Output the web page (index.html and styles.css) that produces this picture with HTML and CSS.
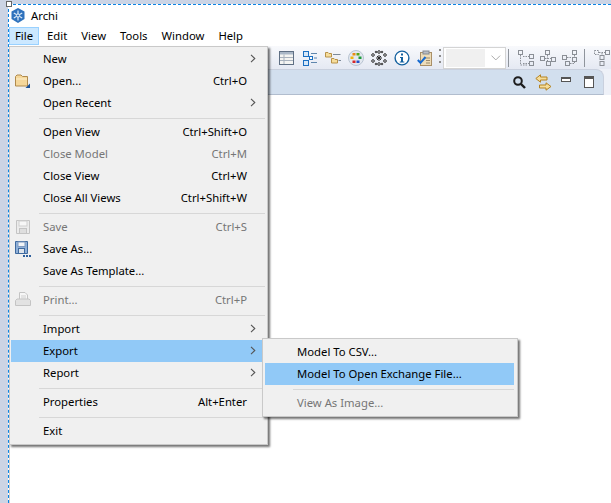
FILE: index.html
```html
<!DOCTYPE html>
<html lang="en">
<head>
	<meta charset="UTF-8">
	<link rel="stylesheet" href="styles.css">
	<title>Archi</title>
</head>
<body>
<div class="desk">
	<div class="handle"></div>
	<div class="win">
		<div class="title">
			<svg class="logo" width="14" height="15" viewBox="0 0 14 15"><path d="M7 0 13.5 3.5V11L7 15 .5 11V3.5Z" fill="#2f72bd"/><path d="M7 2.5V12.5M2.8 5 11.2 10M11.2 5 2.8 10" stroke="#dbe9f7" stroke-width="1.2"/><circle cx="7" cy="7.5" r="1.6" fill="#2f72bd" stroke="#dbe9f7"/></svg>
			<span>Archi</span>
		</div>
		<div class="menubar">
			<span class="top active">File</span>
			<span class="top">Edit</span>
			<span class="top">View</span>
			<span class="top">Tools</span>
			<span class="top">Window</span>
			<span class="top">Help</span>
		</div>
		<div class="toolbar">
			<svg class="ic" viewBox="0 0 16 16"><rect x=".5" y="1.5" width="14" height="13" fill="#f4f4f2" stroke="#5f6f84"/><rect x="1" y="2" width="13" height="2.5" fill="#aab7c7"/><path d="M1 7.5H14M1 10.5H14M5 4.5V14" stroke="#a9b2be"/></svg>
			<svg class="ic" viewBox="0 0 16 16"><rect x="1.500" y="1.500" width="5" height="5" fill="#d6e7f8" stroke="#1b6fc2"/><rect x="1.500" y="10.500" width="5" height="5" fill="#d6e7f8" stroke="#1b6fc2"/><rect x="7.500" y="6.500" width="3" height="3" fill="#fff" stroke="#1b6fc2"/><path d="M9 3.500H15M12 8H15M9 12.500H15" stroke="#5f86ad"/></svg>
			<svg class="ic" viewBox="0 0 16 16"><path d="M.5 2.500H3L4 3.500H6.500V7H.5Z" fill="#f6dd9c" stroke="#b8924a"/><path d="M6.500 8.500H9L10 9.500H12.500V13H6.500Z" fill="#f6dd9c" stroke="#b8924a"/><path d="M8 4.500H15.500M13.500 10.500H16" stroke="#7d8a99"/></svg>
			<svg class="ic" viewBox="0 0 16 16"><circle cx="8" cy="8" r="7.500" fill="#e3e8f0" stroke="#b9c4d2"/><rect x="4.500" y="3" width="3" height="2.500" fill="#e88a14"/><rect x="8.500" y="3" width="3" height="2.500" fill="#58a618"/><rect x="2.500" y="6.500" width="3" height="2.500" fill="#efb50f"/><rect x="10.500" y="6.500" width="3" height="2.500" fill="#1c9a3c"/><rect x="4.500" y="10.500" width="3" height="2.500" fill="#d6262a"/><rect x="8.500" y="10.500" width="3" height="2.500" fill="#2450c8"/></svg>
			<svg class="ic" viewBox="0 0 16 16" fill="none" stroke="#2b2b2b"><circle cx="2" cy="5" r="1.300"/><circle cx="2" cy="11" r="1.300"/><circle cx="14" cy="5" r="1.300"/><circle cx="14" cy="11" r="1.300"/><circle cx="8" cy="2" r="1.300"/><circle cx="8" cy="14" r="1.300"/><circle cx="5" cy="2" r=".8"/><circle cx="11" cy="2" r=".8"/><circle cx="5" cy="14" r=".8"/><circle cx="11" cy="14" r=".8"/><path d="M8 5V11M5 8H11M6 6 10 10M10 6 6 10"/></svg>
			<svg class="ic" viewBox="0 0 16 16"><circle cx="8" cy="8" r="6.900" fill="#fff" stroke="#14619f" stroke-width="1.400"/><rect x="7" y="3.500" width="2" height="2" fill="#14619f"/><path d="M6 7H9V11.500H10.300V12.500H5.800V11.500H7V8H6Z" fill="#14619f"/></svg>
			<svg class="ic" viewBox="0 0 16 16"><rect x="3.500" y="2.500" width="11" height="13" fill="#eddcb9" stroke="#a98f68"/><rect x="6" y="1" width="6" height="3" fill="#b9bdc4" stroke="#858a92"/><path d="M8 8H13M9 10.500H13M9 13H13" stroke="#9b8a6c"/><path d="M.8 10 3.500 12.800 8.500 7" fill="none" stroke="#1569d0" stroke-width="2"/></svg>
			<span class="grip"></span>
			<span class="combo"><span class="combo-fill"></span><svg width="10" height="6" viewBox="0 0 10 6"><path d="M.5.5 5 5 9.500.5" fill="none" stroke="#a8a8a8"/></svg></span>
			<span class="tsep"></span>
			<svg class="ic sm" viewBox="0 0 16 16" fill="none" stroke="#8b8f96"><rect x=".5" y=".5" width="4" height="4"/><rect x="11.500" y="4.500" width="4" height="4"/><rect x="11.500" y="11.500" width="4" height="4"/><path d="M2.500 5V15H10M5 6.500H11M5 13.500H11" stroke-dasharray="1.500 1"/></svg>
			<svg class="ic sm" viewBox="0 0 16 16" fill="none" stroke="#8b8f96"><rect x="5.500" y=".5" width="4" height="4"/><rect x=".5" y="6.500" width="4" height="4"/><rect x="11.500" y="7.500" width="4" height="4"/><rect x="6.500" y="11.500" width="4" height="4"/><path d="M7.500 5V11M5 8.500H11" stroke-dasharray="1.500 1"/></svg>
			<svg class="ic sm" viewBox="0 0 16 16" fill="none" stroke="#8b8f96"><rect x="10.500" y=".5" width="4" height="4"/><rect x=".5" y="5.500" width="4" height="4"/><rect x="10.500" y="7.500" width="4" height="4"/><rect x="3.500" y="11.500" width="4" height="4"/><path d="M5 7.500H10M12.500 5V7M8 13.500H12.500V12" stroke-dasharray="1.500 1"/></svg>
			<span class="tsep second"></span>
			<svg class="ic" viewBox="0 0 16 16" fill="none" stroke="#8b8f96"><rect x=".5" y=".5" width="4" height="4" stroke-dasharray="1.500 1"/><rect x="11.500" y=".5" width="4" height="4"/><rect x="6" y="5.500" width="4" height="4"/><rect x="6" y="11.500" width="4" height="4"/><path d="M5 2.500H11M8 3V5.500" stroke-dasharray="1.500 1"/></svg>
		</div>
		<div class="tabstrip">
			<div class="tabbar">
				<svg width="13" height="13" viewBox="0 0 13 13"><circle cx="5" cy="5" r="3.800" fill="none" stroke="#1d1d1d" stroke-width="2"/><path d="M8 8 12 12" stroke="#1d1d1d" stroke-width="2.400"/></svg>
				<svg width="17" height="17" viewBox="0 0 17 17"><path d="M.8 4.500 5.500.8V3H12V6H5.500V8.200Z" fill="#f5dd9a" stroke="#b58322"/><path d="M16 12.500 11 16.200V14H4.500V11H11V8.800Z" fill="#f5dd9a" stroke="#b58322"/></svg>
				<span class="minbtn"></span>
				<span class="maxbtn"></span>
			</div>
		</div>
		<div class="content"></div>

		<div class="menu file-menu">
			<div class="item"><span class="gut"></span><span class="lbl">New</span><span class="more"><svg width="6" height="9" viewBox="0 0 6 9"><path d="M1 .8 4.800 4.500 1 8.200" fill="none" stroke="#555" stroke-width="1.100"/></svg></span></div>
			<div class="item"><span class="gut"><svg width="16" height="16" viewBox="0 0 16 16"><path d="M.5 3.500 2 2H6L7.500 3.500H12.500V13H.5Z" fill="#f5d79a" stroke="#b08a4c"/><path d="M1 6H12" stroke="#fdf0cf"/><path d="M15 10.500V15H10.500Z" fill="#1b4f91"/></svg></span><span class="lbl">Open...</span><span class="key">Ctrl+O</span><span class="more"></span></div>
			<div class="item"><span class="gut"></span><span class="lbl">Open Recent</span><span class="more"><svg width="6" height="9" viewBox="0 0 6 9"><path d="M1 .8 4.800 4.500 1 8.200" fill="none" stroke="#555" stroke-width="1.100"/></svg></span></div>
			<div class="sep"></div>
			<div class="item"><span class="gut"></span><span class="lbl">Open View</span><span class="key">Ctrl+Shift+O</span><span class="more"></span></div>
			<div class="item off"><span class="gut"></span><span class="lbl">Close Model</span><span class="key">Ctrl+M</span><span class="more"></span></div>
			<div class="item"><span class="gut"></span><span class="lbl">Close View</span><span class="key">Ctrl+W</span><span class="more"></span></div>
			<div class="item"><span class="gut"></span><span class="lbl">Close All Views</span><span class="key">Ctrl+Shift+W</span><span class="more"></span></div>
			<div class="sep"></div>
			<div class="item off"><span class="gut"><svg width="16" height="16" viewBox="0 0 16 16"><path d="M1.500 1.500H14.500V14.500H1.500Z" fill="#ececec" stroke="#c4c4c4"/><rect x="4" y="2" width="8" height="5" fill="#f7f7f7" stroke="#cfcfcf"/><rect x="4.500" y="9.500" width="7" height="5" fill="#dedede" stroke="#c4c4c4"/></svg></span><span class="lbl">Save</span><span class="key">Ctrl+S</span><span class="more"></span></div>
			<div class="item"><span class="gut"><svg width="16" height="16" viewBox="0 0 16 16"><path d="M.5 .5H12.500V12.500H.5Z" fill="#8fb0d8" stroke="#3f6a9f"/><rect x="3" y="1" width="7" height="4.500" fill="#f2f5f8" stroke="#7f9ac0"/><rect x="3.500" y="7.500" width="6" height="5" fill="#dfe5ec" stroke="#3f6a9f"/><path d="M8 14H10V16H8ZM11 14H13V16H11ZM14 14H16V16H14Z" fill="#2e5f9c"/></svg></span><span class="lbl">Save As...</span><span class="more"></span></div>
			<div class="item"><span class="gut"></span><span class="lbl">Save As Template...</span><span class="more"></span></div>
			<div class="sep"></div>
			<div class="item off"><span class="gut"><svg width="16" height="16" viewBox="0 0 16 16"><path d="M4.500 .5H10L12.500 3V8H4.500Z" fill="#f6f6f6" stroke="#c4c4c4"/><path d="M.5 8.500 2 7H14L15.500 8.500V13.500H.5Z" fill="#e2e2e2" stroke="#c4c4c4"/><path d="M6 4H11M6 6H11" stroke="#cfcfcf"/></svg></span><span class="lbl">Print...</span><span class="key">Ctrl+P</span><span class="more"></span></div>
			<div class="sep"></div>
			<div class="item"><span class="gut"></span><span class="lbl">Import</span><span class="more"><svg width="6" height="9" viewBox="0 0 6 9"><path d="M1 .8 4.800 4.500 1 8.200" fill="none" stroke="#555" stroke-width="1.100"/></svg></span></div>
			<div class="item hot"><span class="gut"></span><span class="lbl">Export</span><span class="more"><svg width="6" height="9" viewBox="0 0 6 9"><path d="M1 .8 4.800 4.500 1 8.200" fill="none" stroke="#555" stroke-width="1.100"/></svg></span></div>
			<div class="item"><span class="gut"></span><span class="lbl">Report</span><span class="more"><svg width="6" height="9" viewBox="0 0 6 9"><path d="M1 .8 4.800 4.500 1 8.200" fill="none" stroke="#555" stroke-width="1.100"/></svg></span></div>
			<div class="sep"></div>
			<div class="item"><span class="gut"></span><span class="lbl">Properties</span><span class="key">Alt+Enter</span><span class="more"></span></div>
			<div class="sep"></div>
			<div class="item"><span class="gut"></span><span class="lbl">Exit</span><span class="more"></span></div>
		</div>

		<div class="menu export-menu">
			<div class="item"><span class="gut"></span><span class="lbl">Model To CSV...</span></div>
			<div class="item hot"><span class="gut"></span><span class="lbl">Model To Open Exchange File...</span></div>
			<div class="sep"></div>
			<div class="item off"><span class="gut"></span><span class="lbl">View As Image...</span></div>
		</div>
	</div>
</div>
</body>
</html>
```

FILE: styles.css
```css
* {
	box-sizing: border-box;
}
html, body {
	margin: 0;
	height: 100%;
	overflow: hidden;
}
body {
	font-family: "Noto Sans", "Open Sans", sans-serif;
	font-size: 11.3px;
	color: #000;
}
.desk {
	position: relative;
	height: 503px;
	padding: 4px 0 0 8px;
	background: #ccd4e4;
}
.handle {
	position: absolute;
	left: 6px;
	top: 1px;
	width: 6px;
	height: 6px;
	background: #fff;
	border: 1px solid #666;
	z-index: 3;
}
.win {
	position: relative;
	display: flex;
	flex-direction: column;
	height: 100%;
	background: #fff;
	border-top: 1px dashed #0b84e4;
	border-left: 1px dashed #0b84e4;
}
.title {
	display: flex;
	align-items: center;
	gap: 6px;
	height: 22px;
	padding: 0 0 1px 2px;
	flex: none;
}
.menubar {
	display: flex;
	height: 19px;
	flex: none;
}
.top {
	display: flex;
	align-items: center;
	padding: 0 5px 1px;
	height: 18px;
	margin-right: 2px;
	border: 1px solid transparent;
}
.top.active {
	background: #cce8ff;
	border-color: #99d1ff;
}
.toolbar {
	display: flex;
	align-items: center;
	flex: none;
	height: 23px;
	padding-left: 270px;
	gap: 7px;
	background: linear-gradient(#f8f9fc, #e5e9f3);
}
.ic {
	width: 16px;
	height: 16px;
	flex: none;
}
.ic.sm {
	margin-right: -1px;
}
.grip {
	width: 2px;
	height: 18px;
	margin: 0 -5px 0 -1px;
	background: repeating-linear-gradient(#8d8d8d 0 2px, transparent 2px 6px);
}
.combo {
	display: flex;
	align-items: center;
	gap: 6px;
	width: 63px;
	height: 22px;
	padding: 0 4px 0 2px;
	background: #fff;
	border: 1px solid #d4d4d4;
}
.combo-fill {
	width: 41px;
	height: 18px;
	background: #f0f0f0;
}
.tsep {
	width: 1px;
	height: 18px;
	margin: 0 2px 0 -5px;
	background: #8f949c;
}
.tsep.second {
	margin: 0 2px 0 0;
}
.tabstrip {
	flex: none;
	background: #eef1f8;
}
.tabbar {
	display: flex;
	align-items: center;
	justify-content: flex-end;
	gap: 9px;
	height: 26px;
	margin-right: 7px;
	padding: 0 9px 0 0;
	background: #d2dfee;
	border-top: 1px solid #c9d0de;
	border-bottom: 1px solid #b1bdce;
	border-right: 1px solid #c9d0de;
	border-top-right-radius: 8px;
}
.minbtn {
	width: 10px;
	height: 5px;
	margin: 0 1px 5px 0;
	background: #fff;
	border: 1px solid #555;
	border-top-width: 2px;
}
.maxbtn {
	width: 10px;
	height: 12px;
	margin-left: 3px;
	background: #fff;
	border: 1px solid #555;
	border-top-width: 3px;
}
.content {
	flex: 1;
	background: #fff;
	border-left: 1px solid #d0d0d0;
}
.menu {
	position: absolute;
	background: #f0f0f0;
	border: 1px solid #c9c9c9;
	box-shadow: 2px 2px 2px rgba(0, 0, 0, .55);
	z-index: 2;
}
.file-menu {
	left: 0;
	top: 41px;
	width: 259px;
	padding: 1px;
	padding-bottom: 2px;
}
.export-menu {
	left: 253px;
	top: 333px;
	width: 256px;
	padding: 2px 3px 2px 2px;
}
.item {
	display: flex;
	align-items: center;
	height: 22px;
	padding-bottom: 1px;
}
.gut {
	display: flex;
	align-items: center;
	width: 32px;
	padding-left: 4px;
	flex: none;
}
.lbl {
	flex: 1;
	white-space: nowrap;
}
.key {
	white-space: nowrap;
}
.more {
	display: flex;
	justify-content: flex-end;
	width: 19px;
	padding-right: 10px;
	flex: none;
}
.hot {
	background: #91c9f7;
}
.off {
	color: #767676;
}
.sep {
	height: 1px;
	margin: 4px 1px 2px 28px;
	background: #d7d7d7;
}
.export-menu .sep {
	margin-right: 0;
}
```
